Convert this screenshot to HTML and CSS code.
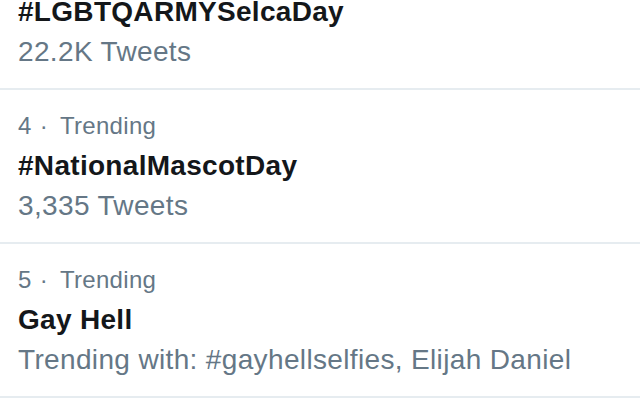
FILE: index.html
```html
<!DOCTYPE html>
<html lang="en">
<head>
<meta charset="utf-8">
<title>Trends</title>
<link rel="stylesheet" href="styles.css">
</head>
<body>
<main class="trends">
  <section class="trend trend-partial">
    <div class="title">#LGBTQARMYSelcaDay</div>
    <div class="sub">22.2K Tweets</div>
  </section>
  <section class="trend">
    <div class="meta">4<span class="dot">·</span>Trending</div>
    <div class="title">#NationalMascotDay</div>
    <div class="sub">3,335 Tweets</div>
  </section>
  <section class="trend">
    <div class="meta">5<span class="dot">·</span>Trending</div>
    <div class="title">Gay Hell</div>
    <div class="sub">Trending with: #gayhellselfies, Elijah Daniel</div>
  </section>
</main>
</body>
</html>
```
FILE: styles.css
```css
html, body {
  margin: 0;
  padding: 0;
  background: #ffffff;
}
body {
  width: 640px;
  height: 414px;
  overflow: hidden;
  font-family: "Liberation Sans", Arial, sans-serif;
}
.trends {
  display: flex;
  flex-direction: column;
  margin-top: -8px;
}
.trend {
  padding: 16px 18px 16px 18px;
  border-bottom: 2px solid #e6ecf0;
}
.trend-partial {
  padding-top: 0;
}
.meta {
  font-size: 24px;
  line-height: 40px;
  color: #657786;
  letter-spacing: 0.3px;
}
.dot {
  margin: 0 6px 0 2px;
  padding: 0 6px;
}
.title {
  font-size: 28px;
  line-height: 40px;
  font-weight: 700;
  color: #14171a;
  letter-spacing: 0.3px;
}
.sub {
  font-size: 28px;
  line-height: 40px;
  color: #657786;
  letter-spacing: 0.35px;
}
```
